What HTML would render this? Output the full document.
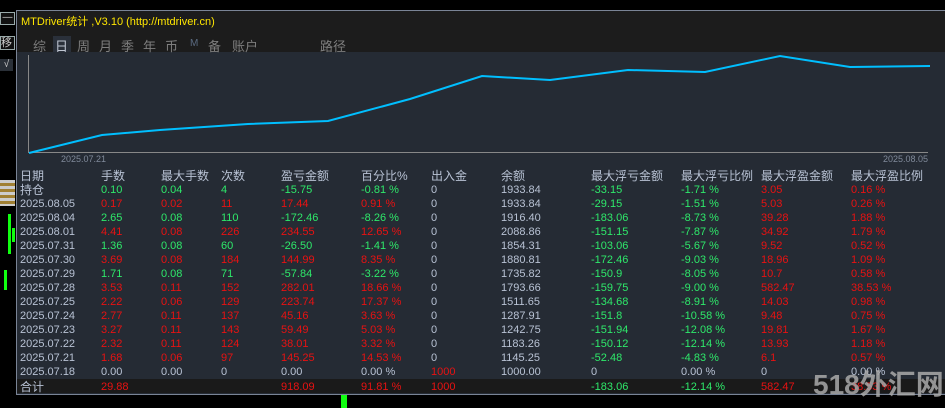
<!DOCTYPE html>
<html><head><meta charset="utf-8"><style>
html,body{margin:0;width:945px;height:408px;background:#000;overflow:hidden;}
body{position:relative;font-family:"Liberation Sans","Noto Sans CJK SC",sans-serif;}
.p{position:absolute;left:16px;top:10px;width:940px;height:383px;border:1px solid #7a8496;border-right:none;background:#252b34;}
.hd{position:absolute;left:0;top:0;width:100%;height:41px;background:#1c1c1c;}
.t{position:absolute;font-size:11px;white-space:nowrap;line-height:14px;}
.g{color:#2ee86a}.r{color:#e81212}.w{color:#b8c2d4}
.tab{position:absolute;top:25px;font-size:13px;color:#7e7e7e;}
</style></head><body>
<div style="position:absolute;left:0;top:12px;width:13px;height:11px;border:1px solid #9aa;background:#111;color:#ccc;font-size:10px;line-height:9px;text-align:center">—</div>
<div style="position:absolute;left:0;top:36px;width:13px;height:12px;border:1px solid #9aa;background:#111;color:#ccc;font-size:11px;line-height:12px">移</div>
<div style="position:absolute;left:0;top:59px;width:13px;height:12px;background:#2a3038;color:#ccc;font-size:10px;line-height:12px;text-align:center">√</div>
<div style="position:absolute;left:0;top:180px;width:15px;height:26px;background:repeating-linear-gradient(#fff 0 3px,#c8a040 3px 6px);opacity:.8"></div>
<div style="position:absolute;left:8px;top:214px;width:3px;height:40px;background:#1f1"></div>
<div style="position:absolute;left:12px;top:228px;width:3px;height:14px;background:#1f1"></div>
<div style="position:absolute;left:4px;top:270px;width:3px;height:20px;background:#1f1"></div>
<div style="position:absolute;left:341px;top:393px;width:6px;height:15px;background:#1f1"></div>
<div class="p">
<div class="hd"></div>
<div class="t" style="left:4px;top:4px;color:#ffe600;font-size:11px">MTDriver统计 ,V3.10 (http://mtdriver.cn)</div>
<div class="tab" style="left:16px">综</div>
<div style="position:absolute;left:36px;top:25px;width:18px;height:16px;background:#2a303a"></div>
<div class="tab" style="left:38px;color:#bfc6d2">日</div>
<div class="tab" style="left:60px">周</div>
<div class="tab" style="left:82px">月</div>
<div class="tab" style="left:104px">季</div>
<div class="tab" style="left:126px">年</div>
<div class="tab" style="left:148px">币</div>
<div class="tab" style="left:173px;font-size:10px;top:27px;color:#5a6a80">M</div>
<div class="tab" style="left:191px">备</div>
<div class="tab" style="left:215px">账户</div>
<div class="tab" style="left:303px">路径</div>
</div>
<svg style="position:absolute;left:0;top:0" width="945" height="408">
<path d="M28.5 55V152.5H928" stroke="#888" fill="none"/>
<polyline points="29,153 102,135 160,130 248,124 328,121 410,99 482,76 550,80 628,70 705,72 780,56 850,67 930,66" stroke="#00bfff" stroke-width="2" fill="none"/>
<text x="61" y="162" font-size="9" fill="#808a9a" font-family="Liberation Sans">2025.07.21</text>
<text x="883" y="162" font-size="9" fill="#808a9a" font-family="Liberation Sans">2025.08.05</text>
</svg>
<div style="position:absolute;left:17px;top:379px;width:930px;height:14px;background:#1a1a1a"></div>
<div id="tb"></div>
<div style="position:absolute;left:813px;top:368px;font-size:28px;line-height:34px;white-space:nowrap;font-weight:bold;color:rgba(170,170,170,.85);font-family:'Liberation Sans','Noto Sans CJK SC',sans-serif">518外汇网</div>
<script>
var xs=[20,101,161,221,281,361,431,501,591,681,761,851];
var H=["日期","手数","最大手数","次数","盈亏金额","百分比%","出入金","余额","最大浮亏金额","最大浮亏比例","最大浮盈金额","最大浮盈比例"];
var R=[
["持仓","g","0.10","0.04","4","-15.75","-0.81 %","0","1933.84","-33.15","-1.71 %","3.05","0.16 %"],
["2025.08.05","r","0.17","0.02","11","17.44","0.91 %","0","1933.84","-29.15","-1.51 %","5.03","0.26 %"],
["2025.08.04","g","2.65","0.08","110","-172.46","-8.26 %","0","1916.40","-183.06","-8.73 %","39.28","1.88 %"],
["2025.08.01","r","4.41","0.08","226","234.55","12.65 %","0","2088.86","-151.15","-7.87 %","34.92","1.79 %"],
["2025.07.31","g","1.36","0.08","60","-26.50","-1.41 %","0","1854.31","-103.06","-5.67 %","9.52","0.52 %"],
["2025.07.30","r","3.69","0.08","184","144.99","8.35 %","0","1880.81","-172.46","-9.03 %","18.96","1.09 %"],
["2025.07.29","g","1.71","0.08","71","-57.84","-3.22 %","0","1735.82","-150.9","-8.05 %","10.7","0.58 %"],
["2025.07.28","r","3.53","0.11","152","282.01","18.66 %","0","1793.66","-159.75","-9.00 %","582.47","38.53 %"],
["2025.07.25","r","2.22","0.06","129","223.74","17.37 %","0","1511.65","-134.68","-8.91 %","14.03","0.98 %"],
["2025.07.24","r","2.77","0.11","137","45.16","3.63 %","0","1287.91","-151.8","-10.58 %","9.48","0.75 %"],
["2025.07.23","r","3.27","0.11","143","59.49","5.03 %","0","1242.75","-151.94","-12.08 %","19.81","1.67 %"],
["2025.07.22","r","2.32","0.11","124","38.01","3.32 %","0","1183.26","-150.12","-12.14 %","13.93","1.18 %"],
["2025.07.21","r","1.68","0.06","97","145.25","14.53 %","0","1145.25","-52.48","-4.83 %","6.1","0.57 %"],
["2025.07.18","w","0.00","0.00","0","0.00","0.00 %","1000","1000.00","0","0.00 %","0","0.00 %"]];
var h="";
function c(x,y,t,cl,fs){h+='<div class="t '+cl+'" style="left:'+x+'px;top:'+y+'px;'+(fs?'font-size:'+fs+'px':'')+'">'+t+'</div>';}
H.forEach(function(t,i){c(xs[i],169,t,"w",12);});
R.forEach(function(r,j){var y=183+j*14;c(xs[0],y,r[0],"w",j==0?12:11);
for(var i=1;i<12;i++){var v=r[i+1],cl;
if(i<=5)cl=r[1];else if(i==6)cl=(v=="0"?"w":"r");else if(i==7)cl="w";else if(i<=9)cl=(r[1]=="w"?"w":"g");else cl=(r[1]=="w"?"w":"r");
c(xs[i],y,v,cl);}});
c(20,380,"合计","w",12);c(101,380,"29.88","r");c(281,380,"918.09","r");c(361,380,"91.81 %","r");c(431,380,"1000","r");
c(591,380,"-183.06","g");c(681,380,"-12.14 %","g");c(761,380,"582.47","r");c(851,380,"38.53 %","r");
document.getElementById("tb").innerHTML=h;
</script>
</body></html>
